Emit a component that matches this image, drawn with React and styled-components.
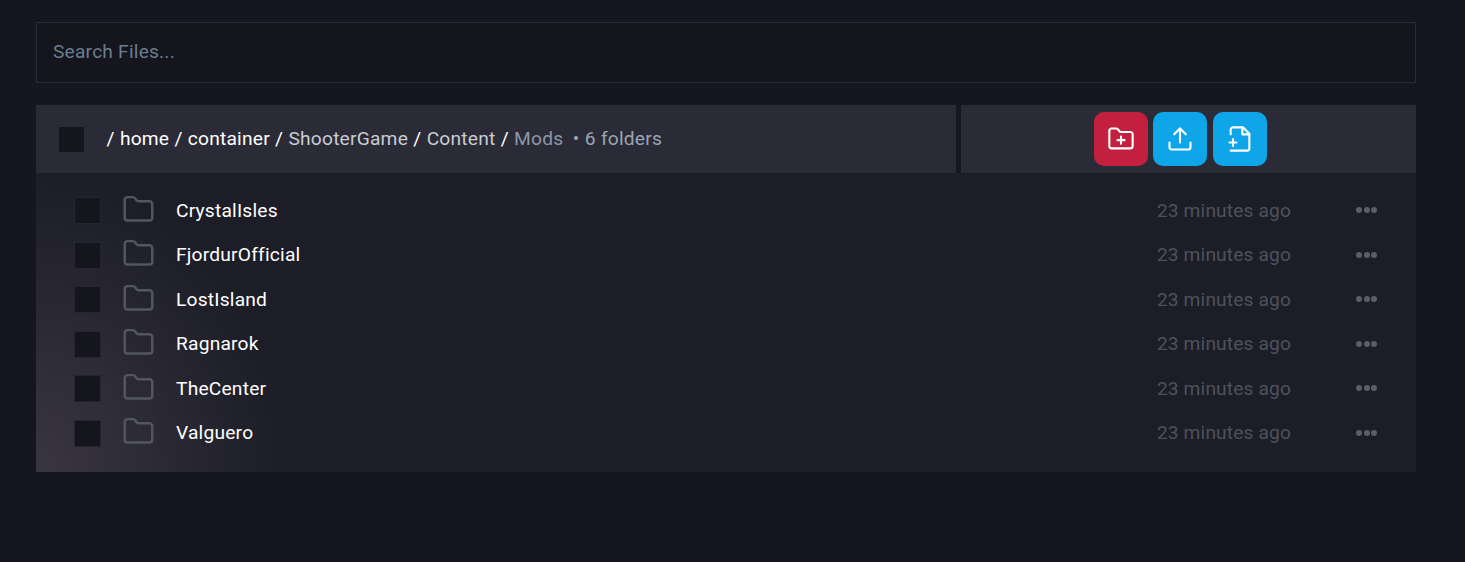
import styled, { createGlobalStyle } from 'styled-components'
import { Folder, FolderPlus, Upload } from 'lucide-react'

const Global = createGlobalStyle`
    html, body {
        margin: 0;
        min-height: 100%;
        background: #15161f;
        font-family: Roboto, "Liberation Sans", sans-serif;
        letter-spacing: 0.2px;
    }
`;

const Page = styled.div`
    width: 1380px;
    height: 540px;
    padding-top: 22px;
    margin-left: 36px;
`;

const SearchBox = styled.input`
    display: block;
    box-sizing: border-box;
    width: 100%;
    height: 61px;
    padding: 0 16px 2px;
    background: #14151d;
    border: 1px solid #2a2b36;
    outline: none;
    color: #fff;
    font-family: inherit;
    font-size: 19.2px;
    letter-spacing: 0.2px;
    &::placeholder {
        color: #6b7e90;
        opacity: 1;
    }
`;

const Header = styled.div`
    display: flex;
    gap: 5px;
    height: 68px;
    margin-top: 22px;
`;

const PathBar = styled.div`
    flex: 0 0 920px;
    box-sizing: border-box;
    display: flex;
    align-items: center;
    padding-left: 23px;
    background: #2b2b38;
    font-size: 19.2px;
`;

const Actions = styled.div`
    flex: 1;
    display: flex;
    justify-content: center;
    align-items: center;
    gap: 5.3px;
    padding-right: 16.4px;
    background: #2b2b38;
`;

const ActionButton = styled.button`
    display: flex;
    align-items: center;
    justify-content: center;
    width: 54px;
    height: 54px;
    padding: 0;
    border: none;
    border-radius: 10px;
    color: #fff;
    background: ${props => props.color};
`;

const Check = styled.div`
    flex: none;
    box-sizing: border-box;
    width: ${props => props.size}px;
    height: ${props => props.size}px;
    margin-top: ${props => props.bordered ? "1.7px" : "0"};
    background: #14151d;
    border: ${props => props.bordered ? "1px solid #24252f" : "none"};
`;

const Crumbs = styled.div`
    margin: 0 0 2px 22.5px;
    color: #fff;
    white-space: pre;
    word-spacing: 0.3px;
`;

const Dim = styled.span`
    color: ${props => props.color};
`;

const Count = styled.span`
    margin-left: 9.5px;
    color: #9aa5b1;
`;

const List = styled.div`
    height: 299px;
    box-sizing: border-box;
    padding-top: 14.9px;
    background:
        radial-gradient(ellipse 250px 300px at 0% 100%, #3a3641 0%, rgba(58, 54, 65, 0) 100%),
        #1c1d27;
`;

const Row = styled.div`
    display: flex;
    align-items: center;
    height: 44.5px;
    padding-left: 38px;
`;

const FolderIcon = styled(Folder)`
    flex: none;
    margin: 0 21px 1.4px 21px;
    color: #525662;
`;

const Name = styled.div`
    flex: 1;
    color: #fff;
    font-size: 19.2px;
`;

const Time = styled.div`
    color: #4e515d;
    font-size: 19.2px;
    letter-spacing: 0.13px;
`;

const Dots = styled.div`
    display: flex;
    gap: 1.5px;
    margin-left: 65px;
    margin-right: 38px;
    width: 22px;
`;

const Dot = styled.span`
    width: 6px;
    height: 6px;
    border-radius: 50%;
    background: #5b5e6a;
`;

const folders = ["CrystalIsles", "FjordurOfficial", "LostIsland", "Ragnarok", "TheCenter", "Valguero"]

const App = () => {
    return (
        <>
            <Global />
            <Page>
                <SearchBox placeholder="Search Files..." />
                <Header>
                    <PathBar>
                        <Check size={25} />
                        <Crumbs>
                            / home / container / <Dim color="#c8ccd3">ShooterGame</Dim> / <Dim color="#c8ccd3">Content</Dim> / <Dim color="#8b98a6">Mods</Dim>
                            <Count>• 6 folders</Count>
                        </Crumbs>
                    </PathBar>
                    <Actions>
                        <ActionButton color="#c3203f"><FolderPlus size={28} strokeWidth={1.8} /></ActionButton>
                        <ActionButton color="#0ea5e9"><Upload size={28} strokeWidth={1.8} /></ActionButton>
                        <ActionButton color="#0ea5e9">
                            <svg width="28" height="28" viewBox="0 0 24 24" fill="none" stroke="currentColor" strokeWidth="1.8" strokeLinecap="round" strokeLinejoin="round">
                                <path d="M4 22h14a2 2 0 0 0 2-2V7.5L14.5 2H6a2 2 0 0 0-2 2v4" />
                                <path d="M14 2v6h6" />
                                <path d="M3 15h6M6 12v6" />
                            </svg>
                        </ActionButton>
                    </Actions>
                </Header>
                <List>
                    {folders.map(name => (
                        <Row key={name}>
                            <Check size={27} bordered />
                            <FolderIcon size={33} strokeWidth={1.8} />
                            <Name>{name}</Name>
                            <Time>23 minutes ago</Time>
                            <Dots><Dot /><Dot /><Dot /></Dots>
                        </Row>
                    ))}
                </List>
            </Page>
        </>
    );
}

export default App;
